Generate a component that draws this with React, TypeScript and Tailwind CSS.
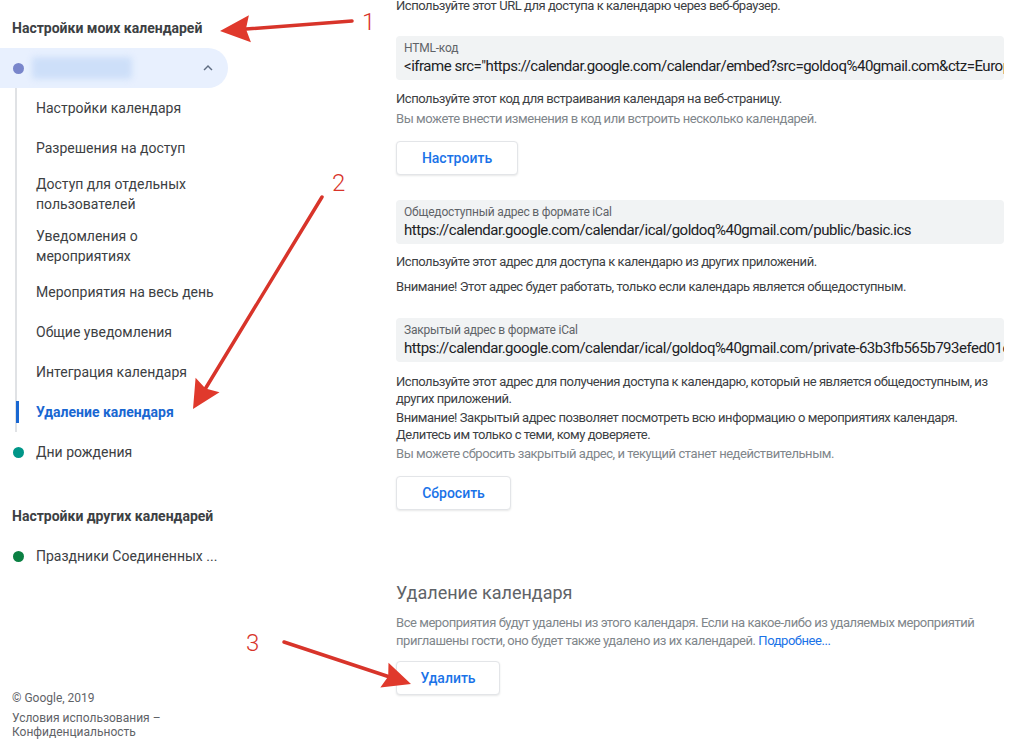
import { ReactNode } from "react";

type Pt = [number, number];

function Arrow({ from, to, head = 26, width = 24 }: { from: Pt; to: Pt; head?: number; width?: number }) {
  const dx = to[0] - from[0];
  const dy = to[1] - from[1];
  const len = Math.hypot(dx, dy);
  const ux = dx / len;
  const uy = dy / len;
  const bx = to[0] - ux * head;
  const by = to[1] - uy * head;
  const px = -uy * (width / 2);
  const py = ux * (width / 2);
  const pts = `${to[0]},${to[1]} ${bx + px},${by + py} ${bx + ux * 4},${by + uy * 4} ${bx - px},${by - py}`;
  return (
    <g>
      <line x1={from[0]} y1={from[1]} x2={bx + ux * 4} y2={by + uy * 4} stroke="#d8342a" strokeWidth={3.5} strokeLinecap="round" />
      <polygon points={pts} fill="#e0392c" />
    </g>
  );
}

function SubItem({ children, active }: { children: ReactNode; active?: boolean }) {
  return (
    <div className="relative flex min-h-[40px] items-center py-[6px] pl-[34px] pr-4">
      {active && <div className="absolute left-[14px] top-[9px] h-[22px] w-[3px] bg-[#1967d2]" />}
      <span
        className={
          active
            ? "text-[14px] leading-[20px] font-bold text-[#1967d2]"
            : "text-[14px] leading-[20px] text-[#3c4043]"
        }
      >
        {children}
      </span>
    </div>
  );
}

function CalRow({ color, children }: { color: string; children: ReactNode }) {
  return (
    <div className="flex h-[40px] items-center pl-[13px]">
      <span className="h-[11px] w-[11px] rounded-full" style={{ backgroundColor: color }} />
      <span className="ml-[12px] text-[14px] text-[#3c4043]">{children}</span>
    </div>
  );
}

function Field({ label, value }: { label: string; value: string }) {
  return (
    <div className="overflow-hidden whitespace-nowrap rounded-[4px] bg-[#f1f3f4] px-2 pt-[4px] pb-[4px]">
      <div className="text-[12px] leading-[16px] text-[#5f6368] tracking-[-0.2px]">{label}</div>
      <div className="text-[15px] leading-[20px] text-[#202124] tracking-[-0.48px]">{value}</div>
    </div>
  );
}

function Btn({ children, w }: { children: ReactNode; w: string }) {
  return (
    <div
      className={`flex h-[34px] items-center justify-center rounded-[4px] border border-[#e3e5e8] bg-white text-[14px] font-medium text-[#1a73e8] shadow-[0_1px_2px_rgba(60,64,67,0.12)] ${w}`}
    >
      {children}
    </div>
  );
}

function P({ children, muted, className = "" }: { children: ReactNode; muted?: boolean; className?: string }) {
  return (
    <p
      className={`text-[13px] leading-[17px] tracking-[-0.45px] ${muted ? "text-[#80868b]" : "text-[#3c4043]"} ${className}`}
    >
      {children}
    </p>
  );
}

export default function App() {
  return (
    <div className="relative flex h-[739px] w-[1017px] overflow-hidden bg-white font-['Roboto',sans-serif]">
      {/* sidebar */}
      <aside className="flex w-[256px] shrink-0 flex-col">
        <div className="flex h-[48px] items-center pl-[12px] pt-[8px] text-[14px] font-bold text-[#3c4043]">
          Настройки моих календарей
        </div>
        <div className="flex h-[40px] w-[228px] items-center rounded-r-full bg-[#e8f0fe] pl-[13px] pr-[11px]">
          <span className="h-[11px] w-[11px] rounded-full bg-[#7986cb]" />
          <span className="ml-[8px] h-[22px] w-[100px] rounded-[3px] bg-[#cddff9] blur-[3px]" />
          <svg className="ml-auto" width="18" height="18" viewBox="0 0 24 24">
            <path d="M7.41 15.41 12 10.83l4.59 4.58L18 14l-6-6-6 6z" fill="#5f6d82" />
          </svg>
        </div>
        <div className="ml-[15px] border-l-2 border-[#e0e2e5]">
          <div className="-ml-[15px]">
            <SubItem>Настройки календаря</SubItem>
            <SubItem>Разрешения на доступ</SubItem>
            <SubItem>
              Доступ для отдельных
              <br />
              пользователей
            </SubItem>
            <SubItem>
              Уведомления о
              <br />
              мероприятиях
            </SubItem>
            <SubItem>Мероприятия на весь день</SubItem>
            <SubItem>Общие уведомления</SubItem>
            <SubItem>Интеграция календаря</SubItem>
            <SubItem active>Удаление календаря</SubItem>
          </div>
        </div>
        <CalRow color="#009688">Дни рождения</CalRow>
        <div className="mt-[24px] flex h-[40px] items-center pl-[12px] text-[14px] font-bold text-[#3c4043]">
          Настройки других календарей
        </div>
        <CalRow color="#0b8043">Праздники Соединенных ...</CalRow>
        <div className="mt-auto pl-[12px] text-[12px] text-[#5f6368]">
          <div className="mb-[6px] leading-[14px]">© Google, 2019</div>
          <div className="leading-[14px]">Условия использования –</div>
          <div className="leading-[14px]">Конфиденциальность</div>
        </div>
      </aside>

      {/* main */}
      <main className="-mt-[3px] ml-[140px] w-[608px] shrink-0">
        <P>Используйте этот URL для доступа к календарю через веб-браузер.</P>
        <div className="mt-[22px]">
          <Field
            label="HTML-код"
            value={'<iframe src="https://calendar.google.com/calendar/embed?src=goldoq%40gmail.com&ctz=Europe%2FMoscow"'}
          />
        </div>
        <P className="mt-[10px]">Используйте этот код для встраивания календаря на веб-страницу.</P>
        <P muted className="mt-[3px]">
          Вы можете внести изменения в код или встроить несколько календарей.
        </P>
        <div className="mt-[14px]">
          <Btn w="w-[122px]">Настроить</Btn>
        </div>

        <div className="mt-[25px]">
          <Field
            label="Общедоступный адрес в формате iCal"
            value="https://calendar.google.com/calendar/ical/goldoq%40gmail.com/public/basic.ics"
          />
        </div>
        <P className="mt-[9px]">Используйте этот адрес для доступа к календарю из других приложений.</P>
        <P className="mt-[8px]">Внимание! Этот адрес будет работать, только если календарь является общедоступным.</P>

        <div className="mt-[23px]">
          <Field
            label="Закрытый адрес в формате iCal"
            value="https://calendar.google.com/calendar/ical/goldoq%40gmail.com/private-63b3fb565b793efed01c2a4e/basic.ics"
          />
        </div>
        <P className="mt-[11px]">
          Используйте этот адрес для получения доступа к календарю, который не является общедоступным, из других
          приложений.
        </P>
        <P className="mt-[2px]">
          Внимание! Закрытый адрес позволяет посмотреть всю информацию о мероприятиях календаря. Делитесь им только
          с теми, кому доверяете.
        </P>
        <P muted className="mt-[2px]">
          Вы можете сбросить закрытый адрес, и текущий станет недействительным.
        </P>
        <div className="mt-[14px]">
          <Btn w="w-[115px]">Сбросить</Btn>
        </div>

        <h2 className="mt-[71px] text-[18px] leading-[24px] text-[#5f6368]">Удаление календаря</h2>
        <P muted className="mt-[9px] leading-[18px]">
          Все мероприятия будут удалены из этого календаря. Если на какое-либо из удаляемых мероприятий приглашены
          гости, оно будет также удалено из их календарей. <span className="text-[#1a73e8]">Подробнее...</span>
        </P>
        <div className="mt-[11px]">
          <Btn w="w-[104px]">Удалить</Btn>
        </div>
      </main>

      {/* annotation arrows */}
      <svg className="pointer-events-none absolute left-0 top-0" width="1017" height="739">
        <Arrow from={[352, 21]} to={[220, 31]} head={30} width={27} />
        <Arrow from={[322, 197]} to={[193, 409]} head={28} width={28} />
        <Arrow from={[284, 642]} to={[411, 684]} head={28} width={26} />
        <text x="362" y="30" fontSize="24" fill="#d8342a" fontFamily="Roboto, sans-serif" fontWeight="300">
          1
        </text>
        <text x="332" y="191" fontSize="24" fill="#d8342a" fontFamily="Roboto, sans-serif" fontWeight="300">
          2
        </text>
        <text x="246" y="651" fontSize="24" fill="#d8342a" fontFamily="Roboto, sans-serif" fontWeight="300">
          3
        </text>
      </svg>
    </div>
  );
}
